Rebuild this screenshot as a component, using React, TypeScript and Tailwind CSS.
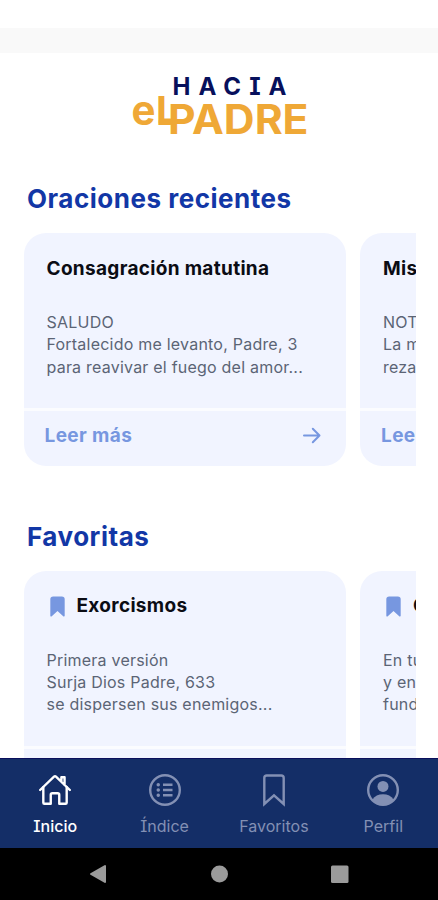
import type { ReactNode } from "react";
import { IoBookmark, IoHomeOutline } from "react-icons/io5";
import { clsx } from "clsx";

type Prayer = {
  title: string;
  lines: string[];
};

const recent: Prayer[] = [
  {
    title: "Consagración matutina",
    lines: ["SALUDO", "Fortalecido me levanto, Padre, 3", "para reavivar el fuego del amor..."],
  },
  { title: "Misa", lines: ["NOTA", "La misa se", "reza en"] },
];

const favorites: Prayer[] = [
  {
    title: "Exorcismos",
    lines: ["Primera versión", "Surja Dios Padre, 633", "se dispersen sus enemigos..."],
  },
  { title: "Oración", lines: ["En tu poder", "y en tu", "fundo"] },
];

function Logo() {
  return (
    <svg width="184" height="66" viewBox="127 72 184 66" className="mx-auto block" role="img">
      <g fontFamily="Inter, sans-serif" fontWeight="700">
        <text x="172.500" y="95" fontSize="24" textLength="114" fill="#07105c" style={{ fontFeatureSettings: '"cv08"' }}>
          HACIA
        </text>
        <g fill="#efa836">
          <text x="131.500" y="125" fontSize="41" textLength="24" lengthAdjust="spacingAndGlyphs">e</text>
          <text x="156" y="125" fontSize="40">l</text>
          <text x="168" y="134" fontSize="41" textLength="140.500" lengthAdjust="spacingAndGlyphs">PADRE</text>
          <rect x="158.700" y="118.500" width="14" height="6.500" rx="2.500" />
        </g>
      </g>
    </svg>
  );
}

function ListIcon() {
  return (
    <svg width="34" height="34" viewBox="0 0 34 34" fill="none" stroke="currentColor">
      <circle cx="17" cy="17" r="14.800" strokeWidth="2.400" />
      <path d="M15 11.800H24.500M15 17H24.500M15 22.200H24.500" strokeWidth="2.400" />
      <path d="M10.200 11.800h.1M10.200 17h.1M10.200 22.200h.1" strokeWidth="3.400" strokeLinecap="round" />
    </svg>
  );
}

function BookmarkIcon() {
  return (
    <svg width="34" height="34" viewBox="0 0 34 34" fill="none" stroke="currentColor" strokeWidth="2.400">
      <path d="M7.300 31V5a2.500 2.500 0 0 1 2.500-2.500h14.400a2.500 2.500 0 0 1 2.500 2.500v26L17 22.300z" strokeLinejoin="miter" />
    </svg>
  );
}

function PersonIcon() {
  return (
    <svg width="34" height="34" viewBox="0 0 34 34" fill="currentColor">
      <circle cx="17" cy="17" r="14.800" fill="none" stroke="currentColor" strokeWidth="2.400" />
      <circle cx="17" cy="13.400" r="5.500" />
      <path d="M6.500 26.500c2-3.600 6-5.300 10.500-5.300s8.500 1.700 10.500 5.300A14.800 14.800 0 0 1 17 31.800 14.800 14.800 0 0 1 6.500 26.500z" />
    </svg>
  );
}

function PrayerCard({ prayer, favorite }: { prayer: Prayer; favorite?: boolean }) {
  return (
    <article className="h-[233px] w-[322.500px] shrink-0 overflow-hidden rounded-[22px] bg-[#f1f4ff] whitespace-nowrap">
      <div className="h-[175px] px-[23px] pt-[22px]">
        <div className="flex h-7 items-center">
          {favorite && <IoBookmark className="mr-[8px] -ml-px mb-px h-[23px] w-[23px] text-[#7797e0]" />}
          <h3 className="text-[19px] font-bold tracking-[0.32px] text-[#0b0c14]">{prayer.title}</h3>
        </div>
        <div className="mt-[28px] text-[16px] leading-[22.400px] tracking-[0.22px] text-[#5b6475]">
          {prayer.lines.map((line) => (
            <p key={line}>{line}</p>
          ))}
        </div>
      </div>
      <div className="flex h-[58px] items-center justify-between border-t-3 border-[#fbfcff] pr-[23px] pb-[6px] pl-[21px] text-[#7797e0]">
        <span className="mt-[2px] text-[19px] font-bold tracking-[0.400px]">Leer más</span>
        <svg width="23" height="23" viewBox="0 0 23 23" fill="none" stroke="currentColor" strokeWidth="2" strokeLinecap="round" strokeLinejoin="round">
          <path d="M4 11.500h15.500M12.800 4.800l6.700 6.700-6.700 6.700" />
        </svg>
      </div>
    </article>
  );
}

function Section({ title, children }: { title: string; children: ReactNode }) {
  return (
    <section>
      <h2 className="pl-[27px] text-[26px] leading-[32px] font-bold tracking-[0.520px] text-[#1237a6]">{title}</h2>
      <div className="mt-[18px] mr-[22px] flex gap-[14px] overflow-hidden pl-[23.500px]">{children}</div>
    </section>
  );
}

function Tab({ icon, label, active }: { icon: ReactNode; label: string; active?: boolean }) {
  return (
    <div className={clsx("flex w-[109.500px] flex-col items-center pt-[14px]", active ? "text-white" : "text-[#8390b4]")}>
      {icon}
      <span className={clsx("mt-[7px] text-[16px] leading-[24px] [font-feature-settings:'cv08']", active ? "font-medium" : "font-normal")}>
        {label}
      </span>
    </div>
  );
}

function App() {
  return (
    <div className="flex h-[900px] w-[438px] flex-col overflow-hidden bg-white font-[Inter,sans-serif]">
      <div className="mt-[28px] h-[25px] shrink-0 bg-[#f9f9f9]" />

      <main className="h-[705px] shrink-0 overflow-hidden pt-[19px]">
        <Logo />
        <div className="mt-[45px]">
          <Section title="Oraciones recientes">
            {recent.map((p) => (
              <PrayerCard key={p.title} prayer={p} />
            ))}
          </Section>
        </div>
        <div className="mt-[54.500px]">
          <Section title="Favoritas">
            {favorites.map((p) => (
              <PrayerCard key={p.title} prayer={p} favorite />
            ))}
          </Section>
        </div>
      </main>

      <nav className="flex h-[90px] shrink-0 border-t border-[#0a0f5c] bg-[#142e67] pl-[0.500px]">
        <Tab active icon={<IoHomeOutline className="h-[34px] w-[34px] [&_path]:stroke-[36px]" />} label="Inicio" />
        <Tab icon={<ListIcon />} label="Índice" />
        <Tab icon={<BookmarkIcon />} label="Favoritos" />
        <Tab icon={<PersonIcon />} label="Perfil" />
      </nav>

      {/* android system buttons */}
      <div className="h-[52px] shrink-0 bg-black">
        <svg width="438" height="52" fill="#9b9b9b">
          <path d="M91 26 105 18v16z" stroke="#9b9b9b" strokeWidth="2" strokeLinejoin="round" />
          <circle cx="219.500" cy="26" r="8.500" />
          <rect x="331" y="17.500" width="17.500" height="17.500" rx="1.500" />
        </svg>
      </div>
    </div>
  );
}

export default App;
